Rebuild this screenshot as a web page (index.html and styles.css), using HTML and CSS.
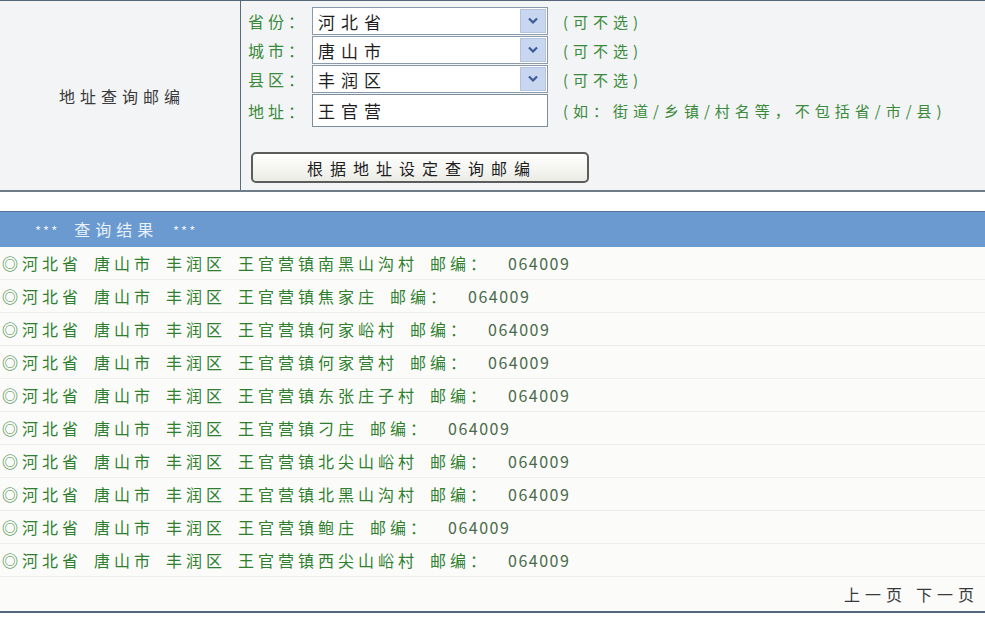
FILE: index.html
```html
<!DOCTYPE html>
<html lang="zh-CN">
<head>
<meta charset="utf-8" />
<title>地址查询邮编</title>
<link rel="stylesheet" href="styles.css">
</head>
<body>
	<div class="query">
		<div class="query-label">地址查询邮编</div>
		<div class="query-form">
			<div class="field">
				<span class="field-name">省份：</span>
				<div class="select"><span>河北省</span><span class="arrow"><svg width="12" height="8" viewBox="0 0 12 8"><path d="M2 1.5 L6 5.5 L10 1.5" fill="none" stroke="#3b5a9a" stroke-width="2.2"/></svg></span></div>
				<span class="hint">(可不选)</span>
			</div>
			<div class="field">
				<span class="field-name">城市：</span>
				<div class="select"><span>唐山市</span><span class="arrow"><svg width="12" height="8" viewBox="0 0 12 8"><path d="M2 1.5 L6 5.5 L10 1.5" fill="none" stroke="#3b5a9a" stroke-width="2.2"/></svg></span></div>
				<span class="hint">(可不选)</span>
			</div>
			<div class="field">
				<span class="field-name">县区：</span>
				<div class="select"><span>丰润区</span><span class="arrow"><svg width="12" height="8" viewBox="0 0 12 8"><path d="M2 1.5 L6 5.5 L10 1.5" fill="none" stroke="#3b5a9a" stroke-width="2.2"/></svg></span></div>
				<span class="hint">(可不选)</span>
			</div>
			<div class="field field-input">
				<span class="field-name">地址：</span>
				<div class="input">王官营</div>
				<span class="hint">(如：街道/乡镇/村名等，不包括省/市/县)</span>
			</div>
			<button class="submit" type="button">根据地址设定查询邮编</button>
		</div>
	</div>

	<div class="result">
		<div class="result-head">*** <span class="result-title">查询结果</span> ***</div>
		<div class="row"><span>◎河北省</span><span>唐山市</span><span>丰润区</span><span>王官营镇南黑山沟村</span><span>邮编：<b>064009</b></span></div>
		<div class="row"><span>◎河北省</span><span>唐山市</span><span>丰润区</span><span>王官营镇焦家庄</span><span>邮编：<b>064009</b></span></div>
		<div class="row"><span>◎河北省</span><span>唐山市</span><span>丰润区</span><span>王官营镇何家峪村</span><span>邮编：<b>064009</b></span></div>
		<div class="row"><span>◎河北省</span><span>唐山市</span><span>丰润区</span><span>王官营镇何家营村</span><span>邮编：<b>064009</b></span></div>
		<div class="row"><span>◎河北省</span><span>唐山市</span><span>丰润区</span><span>王官营镇东张庄子村</span><span>邮编：<b>064009</b></span></div>
		<div class="row"><span>◎河北省</span><span>唐山市</span><span>丰润区</span><span>王官营镇刁庄</span><span>邮编：<b>064009</b></span></div>
		<div class="row"><span>◎河北省</span><span>唐山市</span><span>丰润区</span><span>王官营镇北尖山峪村</span><span>邮编：<b>064009</b></span></div>
		<div class="row"><span>◎河北省</span><span>唐山市</span><span>丰润区</span><span>王官营镇北黑山沟村</span><span>邮编：<b>064009</b></span></div>
		<div class="row"><span>◎河北省</span><span>唐山市</span><span>丰润区</span><span>王官营镇鲍庄</span><span>邮编：<b>064009</b></span></div>
		<div class="row"><span>◎河北省</span><span>唐山市</span><span>丰润区</span><span>王官营镇西尖山峪村</span><span>邮编：<b>064009</b></span></div>
		<div class="pager"><a href="#">上一页</a><a href="#">下一页</a></div>
	</div>
</body>
</html>
```

FILE: styles.css
```css
html, body {
	margin: 0;
	padding: 0;
	background-color: #FFFFFF;
	font-family: "Noto Sans CJK SC", "Liberation Sans", sans-serif;
	font-size: 15px;
}

.query {
	display: flex;
	height: 189px;
	background-color: #F3F4F6;
	border-top: 1px solid #55657a;
	border-bottom: 2px solid #6f7c8a;
}

.query-label {
	width: 241px;
	border-right: 1px solid #5b6b7e;
	display: flex;
	align-items: center;
	justify-content: center;
	color: #3a3a3a;
	font-size: 16px;
	letter-spacing: 5px;
	padding-left: 4px;
	box-sizing: border-box;
}

.query-form {
	flex: 1;
	padding: 6px 0 0 7px;
}

.field {
	display: flex;
	align-items: center;
	height: 28px;
	margin-bottom: 1px;
}

.field-input {
	height: 33px;
}

.field-name {
	width: 64px;
	color: #3a8a3a;
	font-size: 16px;
	letter-spacing: 4px;
}

.select,
.input {
	width: 236px;
	height: 100%;
	box-sizing: border-box;
	border: 1px solid #8a9aaa;
	background-color: #FFFFFF;
	display: flex;
	align-items: center;
	justify-content: space-between;
	padding-left: 5px;
	color: #1e1e1e;
	font-size: 17px;
	letter-spacing: 6px;
}

.input {
	border-color: #7f8c99;
}

.arrow {
	width: 26px;
	height: 24px;
	margin-right: 1px;
	background-color: #c8d6ef;
	border: 1px solid #b4c4e0;
	box-sizing: border-box;
	display: flex;
	align-items: center;
	justify-content: center;
}

.hint {
	margin-left: 15px;
	color: #3a8a3a;
	letter-spacing: 5px;
}

.submit {
	margin: 24px 0 0 3px;
	width: 338px;
	height: 31px;
	border: 2px solid #5c5c5c;
	border-radius: 5px;
	background: linear-gradient(#FFFFFF, #ECECE6);
	font-family: inherit;
	font-size: 16px;
	color: #1e1e1e;
	letter-spacing: 7px;
	padding-left: 10px;
	cursor: pointer;
}

.result {
	margin-top: 19px;
	border-bottom: 2px solid #55657a;
}

.result-head {
	height: 35px;
	line-height: 35px;
	background-color: #6a9ad0;
	border-top: 1px solid #55749c;
	color: #e8f0fa;
	padding-left: 35px;
	letter-spacing: 2px;
	font-size: 13px;
}

.result-title {
	font-size: 16px;
	letter-spacing: 5px;
	margin: 0 10px;
}

.row {
	height: 33px;
	line-height: 33px;
	padding-left: 2px;
	background-color: #FBFCFA;
	border-bottom: 1px solid #ececec;
	box-sizing: border-box;
	color: #2f7f2f;
	font-size: 16px;
	letter-spacing: 4px;
	white-space: nowrap;
}

.row span {
	margin-right: 12px;
}

.row b {
	font-weight: normal;
	letter-spacing: 1.5px;
	margin-left: 18px;
	color: #4a6a4a;
}

.pager {
	height: 34px;
	line-height: 34px;
	text-align: right;
	padding-right: 6px;
	background-color: #FBFCFA;
}

.pager a {
	color: #3a3a3a;
	font-size: 16px;
	text-decoration: none;
	letter-spacing: 5px;
	margin-left: 9px;
}
```
